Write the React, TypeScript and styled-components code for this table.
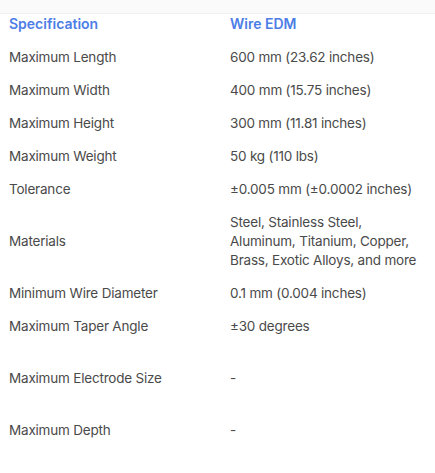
import styled, {createGlobalStyle} from 'styled-components';

const GlobalStyle = createGlobalStyle`
  body {
    margin: 0;
    background: #ffffff;
    font-family: Inter, "Noto Sans", sans-serif;
  }
`;

type Spec = {
  label: string;
  value: string;
  tall?: boolean;
};

const specs: Spec[] = [
  {label: 'Maximum Length', value: '600 mm (23.62 inches)'},
  {label: 'Maximum Width', value: '400 mm (15.75 inches)'},
  {label: 'Maximum Height', value: '300 mm (11.81 inches)'},
  {label: 'Maximum Weight', value: '50 kg (110 lbs)'},
  {label: 'Tolerance', value: '±0.005 mm (±0.0002 inches)'},
  {label: 'Materials', value: 'Steel, Stainless Steel, Aluminum, Titanium, Copper, Brass, Exotic Alloys, and more'},
  {label: 'Minimum Wire Diameter', value: '0.1 mm (0.004 inches)'},
  {label: 'Maximum Taper Angle', value: '±30 degrees'},
  {label: 'Maximum Electrode Size', value: '-', tall: true},
  {label: 'Maximum Depth', value: '-'},
];

const Wrapper = styled.div`
  width: 435px;
`;

const TopBand = styled.div`
  height: 13px;
  background: #fafafa;
  border-bottom: 1px solid #f1f1f1;
`;

const Table = styled.div`
  display: grid;
  grid-template-columns: 221px 1fr;
  padding: 0 4px 0 9px;
  font-size: 13.5px;
  line-height: 19px;
  color: #4a4a4a;
`;

const HeadCell = styled.div`
  padding: 0 0 8px;
  font-size: 14px;
  font-weight: 600;
  color: #4d7de6;
`;

const Cell = styled.div<{$tall?: boolean}>`
  display: flex;
  align-items: center;
  min-height: ${({$tall}) => ($tall ? '57px' : '19px')};
  padding: 7px 0;
  letter-spacing: -0.2px;
`;

export default function App() {
  return (
    <Wrapper>
      <GlobalStyle />
      <TopBand />
      <Table>
        <HeadCell>Specification</HeadCell>
        <HeadCell>Wire EDM</HeadCell>
        {specs.map((s) => (
          <>
            <Cell key={s.label} $tall={s.tall}>
              {s.label}
            </Cell>
            <Cell key={s.label + '-v'} $tall={s.tall}>
              {s.value}
            </Cell>
          </>
        ))}
      </Table>
    </Wrapper>
  );
}
